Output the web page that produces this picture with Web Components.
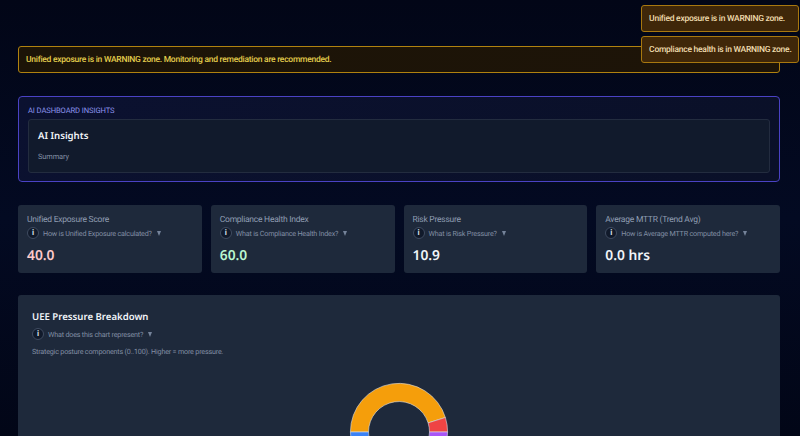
<!DOCTYPE html>
<html><head><meta charset="utf-8">
<style>
html,body{margin:0;height:436px;overflow:hidden;background:#020617;}
body{font-family:Roboto,"Liberation Sans",sans-serif;color:#e2e8f0;text-rendering:geometricPrecision;}
dash-page{display:block}
</style></head><body>
<template id="t-page"><style>
:host{display:flex;flex-direction:column;padding:46px 20px 0 18px;height:436px;box-sizing:border-box;background:linear-gradient(#020617,#030a22 50%,#020617)}
.grid{display:grid;grid-template-columns:repeat(4,1fr);gap:9px;margin-top:23px}
</style><slot name="toasts"></slot><slot name="alert"></slot><slot name="ai"></slot><div class="grid"><slot name="kpi"></slot></div><slot name="panel"></slot></template>

<template id="t-toasts"><style>
:host{position:absolute;top:5px;right:1.5px;display:flex;flex-direction:column;gap:4px;align-items:stretch;z-index:2}
</style><slot></slot></template>

<template id="t-toast"><style>
:host{display:block;box-sizing:border-box;height:27px;line-height:27px;padding:0 6px 0 7px;background:#3f2709;border:1px solid #a8780f;border-radius:3px;font-size:8.5px;letter-spacing:-.26px;font-weight:500;color:#efdcae;white-space:nowrap}
</style><slot></slot></template>

<template id="t-alert"><style>
:host{display:block;box-sizing:border-box;height:27px;line-height:27px;padding:0 7px;background:linear-gradient(90deg,#1c1407,#1d1408);border:1px solid #b0820f;border-radius:3px;font-size:8.5px;letter-spacing:-.26px;font-weight:500;color:#e3cd4c}
</style><slot></slot></template>

<template id="t-ai"><style>
:host{display:block;box-sizing:border-box;height:86px;margin-top:23px;padding:8px 9px;background:linear-gradient(120deg,#0b1130,#0a1028);border:1px solid #4a42c4;border-radius:4px}
.lbl{font-size:7.6px;letter-spacing:-.1px;line-height:11px;color:#8b93ee;text-transform:uppercase}
.in{box-sizing:border-box;height:54px;margin-top:3px;padding:9px 9px;background:#111a2c;border:1px solid #232c3f;border-radius:3px}
h3{margin:0;font-family:"Noto Sans",sans-serif;font-size:9.6px;line-height:14px;font-weight:600;color:#f1f5f9}
p{margin:8px 0 0;font-size:7.4px;letter-spacing:-.1px;line-height:11px;color:#8290a5}
</style><div class="lbl"><slot name="label"></slot></div><div class="in"><h3><slot name="title"></slot></h3><p><slot name="body"></slot></p></div></template>

<template id="t-help"><style>
:host{display:flex;align-items:center;height:14px;font-size:7.2px;letter-spacing:-.2px;color:#828fa4;white-space:nowrap}
.i{box-sizing:border-box;width:12px;height:12px;border-radius:50%;border:1px solid #3f4b60;background:#111a2b;color:#dbe2ec;font-size:8px;font-weight:700;line-height:10px;text-align:center;margin-right:4px;font-style:normal;letter-spacing:0}
.tri{width:0;height:0;border-left:2.8px solid transparent;border-right:2.8px solid transparent;border-top:5.5px solid #75839a;margin-left:5px}
</style><i class="i">i</i><span><slot></slot></span><span class="tri"></span></template>

<template id="t-kpi"><style>
:host{display:block;box-sizing:border-box;height:68px;padding:10px 9px 0;background:#1e293b;border-radius:3px}
.t{font-size:8.5px;letter-spacing:-.25px;line-height:11px;color:#8f9db2}
.v{margin-top:7px;font-family:"Noto Sans",sans-serif;font-size:13.8px;line-height:17px;font-weight:600;color:var(--c,#f1f5f9)}
</style><div class="t"><slot name="title"></slot></div><slot name="help"></slot><div class="v"><slot name="value"></slot></div></template>

<template id="t-panel"><style>
:host{display:block;box-sizing:border-box;flex:none;height:200px;margin-top:22px;padding:15px 14px 0;background:#1e293b;border-radius:3px}
h3{margin:0;font-family:"Noto Sans",sans-serif;font-size:9.6px;line-height:14px;font-weight:600;color:#f1f5f9}
p{margin:5px 0 0;font-size:7.2px;letter-spacing:-.2px;line-height:11px;color:#828fa4}
.c{display:flex;justify-content:center;margin-top:25px}
::slotted(help-row){margin-top:3px}
</style><h3><slot name="title"></slot></h3><slot name="help"></slot><p><slot name="sub"></slot></p><div class="c"><slot name="chart"></slot></div></template>

<dash-page>
 <toast-stack slot="toasts">
  <warn-toast>Unified exposure is in WARNING zone.</warn-toast>
  <warn-toast>Compliance health is in WARNING zone.</warn-toast>
 </toast-stack>
 <warn-alert slot="alert">Unified exposure is in WARNING zone. Monitoring and remediation are recommended.</warn-alert>
 <ai-box slot="ai"><span slot="label">AI Dashboard Insights</span><span slot="title">AI Insights</span><span slot="body">Summary</span></ai-box>
 <kpi-card slot="kpi" style="--c:#fecaca"><span slot="title">Unified Exposure Score</span><help-row slot="help">How is Unified Exposure calculated?</help-row><span slot="value">40.0</span></kpi-card>
 <kpi-card slot="kpi" style="--c:#bbf7d0"><span slot="title">Compliance Health Index</span><help-row slot="help">What is Compliance Health Index?</help-row><span slot="value">60.0</span></kpi-card>
 <kpi-card slot="kpi"><span slot="title">Risk Pressure</span><help-row slot="help">What is Risk Pressure?</help-row><span slot="value">10.9</span></kpi-card>
 <kpi-card slot="kpi"><span slot="title">Average MTTR (Trend Avg)</span><help-row slot="help">How is Average MTTR computed here?</help-row><span slot="value">0.0 hrs</span></kpi-card>
 <chart-panel slot="panel"><span slot="title">UEE Pressure Breakdown</span><help-row slot="help">What does this chart represent?</help-row><span slot="sub">Strategic posture components (0..100). Higher = more pressure.</span>
  <svg slot="chart" width="100" height="100" viewBox="-50 -50 100 100" stroke="#d9dee6" stroke-width=".6">
   <path fill="#f59e0b" d="M-48.6 0A48.6 48.6 0 0 1 46.4-14.5L29.1-9.1A30.5 30.5 0 0 0-30.5 0Z"/>
   <path fill="#ef4444" d="M46.4-14.5A48.6 48.6 0 0 1 48.6 0L30.5 0A30.5 30.5 0 0 0 29.1-9.1Z"/>
   <path fill="#a855f7" d="M48.6 0A48.6 48.6 0 0 1 0 48.6L0 30.5A30.5 30.5 0 0 0 30.5 0Z"/>
   <path fill="#3b82f6" d="M0 48.6A48.6 48.6 0 0 1-48.6 0L-30.5 0A30.5 30.5 0 0 0 0 30.5Z"/>
  </svg>
 </chart-panel>
</dash-page>
<script>
const reg=(n,t)=>customElements.define(n,class extends HTMLElement{constructor(){super();this.attachShadow({mode:'open'}).append(document.getElementById(t).content.cloneNode(true))}});
[['dash-page','t-page'],['toast-stack','t-toasts'],['warn-toast','t-toast'],['warn-alert','t-alert'],['ai-box','t-ai'],['help-row','t-help'],['kpi-card','t-kpi'],['chart-panel','t-panel']].forEach(a=>reg(...a));
</script>
</body></html>
